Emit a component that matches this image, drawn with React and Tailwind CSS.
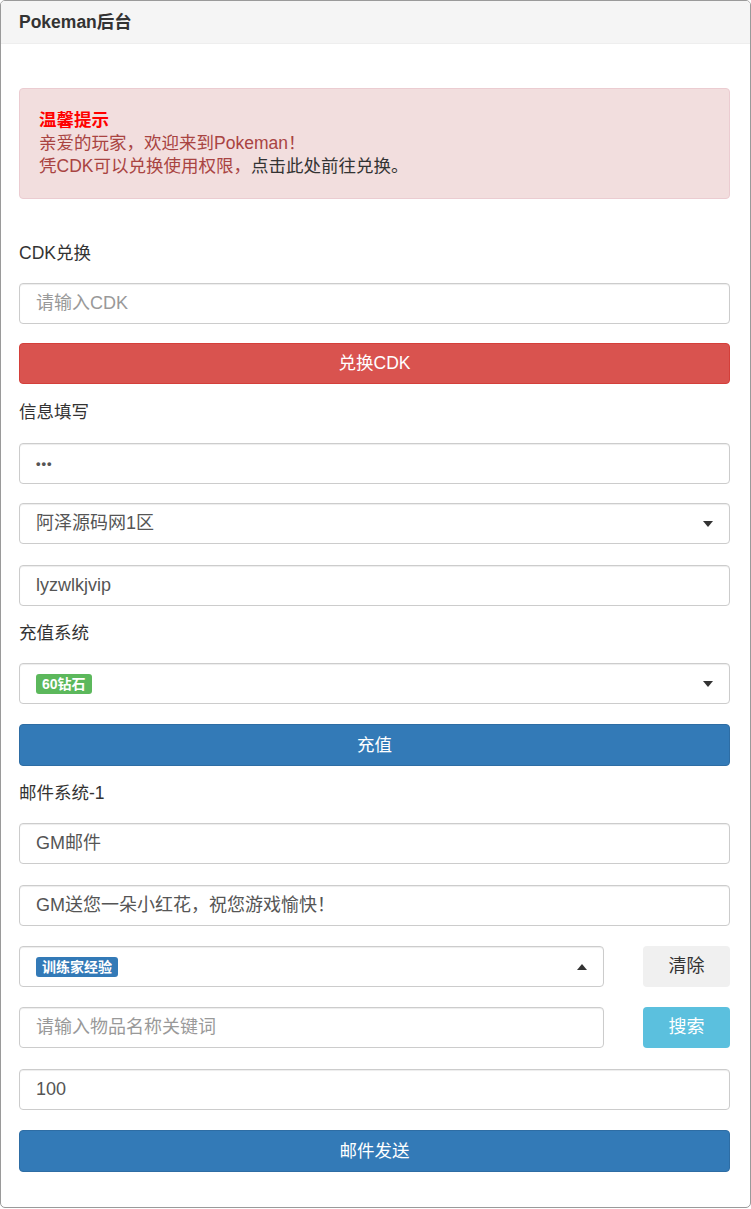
import React from "react";

const font = { fontFamily: '"Liberation Sans", "Noto Sans CJK SC", Arial, sans-serif' };

function Caret({ up }) {
  return (
    <svg width="10" height="6" viewBox="0 0 10 6" className="shrink-0">
      {up ? <path d="M0 6 L5 0 L10 6 Z" fill="#333" /> : <path d="M0 0 L10 0 L5 6 Z" fill="#333" />}
    </svg>
  );
}

function Field({ children, className = "" }) {
  return (
    <div
      className={`h-[41px] border border-[#ccc] rounded-[4px] bg-white flex items-center px-[16px] text-[18px] text-[#555] shadow-[inset_0_1px_1px_rgba(0,0,0,0.075)] ${className}`}
    >
      {children}
    </div>
  );
}

function Label({ children, className = "" }) {
  return <div className={`h-[22px] leading-[22px] text-[17.5px] text-[#333] ${className}`}>{children}</div>;
}

export default function App() {
  return (
    <div className="w-[751px] h-[1209px] bg-white" style={font}>
      <div className="h-[1208px] border border-[#9a9a9a] rounded-[5px] overflow-hidden">
        {/* HEADER */}
        <div className="h-[43px] bg-[#f5f5f5] border-b border-[#eee] flex items-center px-[18px]">
          <span className="text-[17.5px] font-bold text-[#333]">Pokeman后台</span>
        </div>

        {/* BODY */}
        <div className="pl-[18px] pr-[20px] flex flex-col">
          {/* ALERT */}
          <div className="mt-[44px] h-[111px] bg-[#f2dede] border border-[#ebccd1] rounded-[4px] px-[19px] pt-[20px] text-[17.5px] leading-[23px] text-[#a94442]">
            <div className="font-bold text-[#ff0000]">温馨提示</div>
            <div>亲爱的玩家，欢迎来到Pokeman！</div>
            <div>
              凭CDK可以兑换使用权限，<span className="text-[#333]">点击此处前往兑换。</span>
            </div>
          </div>

          <Label className="mt-[43px]">CDK兑换</Label>
          <Field className="mt-[19px] text-[#999]">请输入CDK</Field>
          <button className="mt-[19px] h-[41px] rounded-[4px] bg-[#d9534f] border border-[#d43f3a] text-white text-[17.5px]">
            兑换CDK
          </button>

          <Label className="mt-[17px]">信息填写</Label>
          <Field className="mt-[20px] text-[#555]">
            <span className="text-[13px] tracking-[1px] font-bold">•••</span>
          </Field>
          <Field className="mt-[19px] justify-between text-[#333]">
            <span>阿泽源码网1区</span>
            <Caret />
          </Field>
          <Field className="mt-[21px]">lyzwlkjvip</Field>

          <Label className="mt-[16px]">充值系统</Label>
          <Field className="mt-[19px] justify-between">
            <span className="bg-[#5cb85c] text-white text-[14px] font-bold leading-none px-[6px] py-[3px] rounded-[3px]">60钻石</span>
            <Caret />
          </Field>
          <button className="mt-[20px] h-[42px] rounded-[4px] bg-[#337ab7] border border-[#2e6da4] text-white text-[17.5px]">
            充值
          </button>

          <Label className="mt-[16px]">邮件系统-1</Label>
          <Field className="mt-[19px]">GM邮件</Field>
          <Field className="mt-[21px]">GM送您一朵小红花，祝您游戏愉快！</Field>

          <div className="mt-[20px] flex items-center">
            <Field className="flex-1 justify-between">
              <span className="bg-[#337ab7] text-white text-[14px] font-bold leading-none px-[6px] py-[3px] rounded-[3px]">训练家经验</span>
              <Caret up />
            </Field>
            <button className="ml-[39px] w-[87px] h-[41px] rounded-[4px] bg-[#f0f0f0] text-[#333] text-[18px]">清除</button>
          </div>
          <div className="mt-[20px] flex items-center">
            <Field className="flex-1 text-[#999]">请输入物品名称关键词</Field>
            <button className="ml-[39px] w-[87px] h-[41px] rounded-[4px] bg-[#5bc0de] text-white text-[18px]">搜索</button>
          </div>
          <Field className="mt-[21px]">100</Field>
          <button className="mt-[20px] h-[42px] rounded-[4px] bg-[#337ab7] border border-[#2e6da4] text-white text-[17.5px]">
            邮件发送
          </button>
        </div>
      </div>
    </div>
  );
}
